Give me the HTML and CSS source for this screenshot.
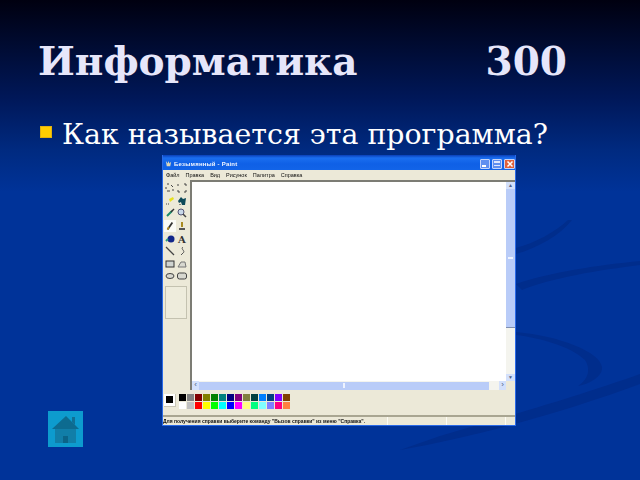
FILE: index.html
```html
<!DOCTYPE html>
<html lang="ru">
<head>
<meta charset="utf-8">
<title>Информатика 300</title>
<link rel="stylesheet" href="styles.css">
</head>
<body>
<main class="slide">
  <svg class="arcs" viewBox="0 0 640 480" aria-hidden="true">
    <g class="arc-group">
      <path d="M640 374C590 392 530 410 440 436L400 450C480 436 570 410 640 384Z"/>
      <path d="M516 284C550 272 600 265 640 261V265C600 270 550 278 522 290Z"/>
      <path d="M516 332C560 336 600 352 602 367C603 376 590 384 578 386C590 378 590 368 585 360C570 346 540 338 516 335Z"/>
      <path d="M516 254C540 247 560 235 572 220H568C555 232 535 243 516 248Z"/>
    </g>
  </svg>
  <h1 class="title"><span>Информатика</span><span>300</span></h1>
  <p class="bullet"><i class="marker"></i>Как называется эта программа?</p>
  <section class="paint">
    <header class="titlebar">
      <svg class="appicon" viewBox="0 0 8 8"><path d="M1 1l2 3 1-3 1 3 2-2-1 5H2z" fill="#ddd6b8"/></svg>
      <span class="apptitle">Безымянный - Paint</span>
      <span class="btn btn-blue"><b class="b-min"></b></span>
      <span class="btn btn-blue"><b class="b-max"></b></span>
      <span class="btn btn-red"><svg viewBox="0 0 8 8"><path d="M1.500 1.500l5 5m0-5l-5 5" stroke="#fff" stroke-width="1.500"/></svg></span>
    </header>
    <nav class="menu"><span>Файл</span><span>Правка</span><span>Вид</span><span>Рисунок</span><span>Палитра</span><span>Справка</span></nav>
    <div class="work">
      <aside class="tools">
        <div class="toolgrid">
          <svg viewBox="0 0 10 10"><path d="M2 1h2M6 2l2 2M8 6v2M1 4v2M2 8h3" stroke="#444" fill="none"/></svg>
          <svg viewBox="0 0 10 10"><path d="M1 1v2M1 7v2h2M7 9h2V7M9 3V1H7" stroke="#444" fill="none"/></svg>
          <svg viewBox="0 0 10 10"><path d="M4 3l4-2 1 2-4 3z" fill="#e6e020"/><path d="M1 8h4" stroke="#444" stroke-dasharray="1 1"/></svg>
          <svg viewBox="0 0 10 10"><path d="M1 5l3-4 2 2 3-1-1 7-3 0-1-3-2 1z" fill="#0d4a5a"/><path d="M3 8v1" stroke="#222"/></svg>
          <svg viewBox="0 0 10 10"><path d="M2 8l5-5" stroke="#1a8a6a" stroke-width="2"/><path d="M6 4l3-3" stroke="#333" stroke-width="1.500"/></svg>
          <svg viewBox="0 0 10 10"><circle cx="4" cy="4" r="3" fill="#c8d8e8" stroke="#557"/><path d="M6 6l3 3" stroke="#444" stroke-width="1.500"/></svg>
          <svg class="tool-on" viewBox="0 0 10 10"><path d="M3 8l4-6" stroke="#333" stroke-width="1.500"/><path d="M3 8l1-2" stroke="#b89020" stroke-width="1.500"/></svg>
          <svg viewBox="0 0 10 10"><path d="M5 1v5" stroke="#a88a20" stroke-width="2"/><path d="M2 8h6" stroke="#555" stroke-width="2"/></svg>
          <svg viewBox="0 0 10 10"><circle cx="6" cy="5" r="3.500" fill="#12268a"/><path d="M1 7l2-2" stroke="#2a9a80" stroke-width="2"/></svg>
          <svg viewBox="0 0 10 10"><text class="tool-a" x="5" y="9" text-anchor="middle">A</text></svg>
          <svg viewBox="0 0 10 10"><path d="M1 1l8 8" stroke="#444" stroke-width="1.200"/></svg>
          <svg viewBox="0 0 10 10"><path d="M6 1c-3 2 3 4 0 6l-2 2" stroke="#555" fill="none"/></svg>
          <svg viewBox="0 0 10 10"><rect x="1" y="2" width="8" height="6" fill="#cfd3d0" stroke="#333"/></svg>
          <svg viewBox="0 0 10 10"><path d="M1 8l3-5h4l1 5z" fill="#d8d8d0" stroke="#777"/></svg>
          <svg viewBox="0 0 10 10"><ellipse cx="5" cy="5" rx="4" ry="2.500" fill="#d8d8d0" stroke="#444"/></svg>
          <svg viewBox="0 0 10 10"><rect x=".5" y="2" width="9" height="6" rx="2" fill="#d8d8d0" stroke="#444"/></svg>
        </div>
        <div class="toolbox"></div>
      </aside>
      <div class="canvasarea">
        <div class="canvasrow">
          <div class="canvas"></div>
          <div class="vscroll">
            <i class="arrow">▲</i>
            <span class="vthumb"><b class="vgrip"></b></span>
            <span class="vtrack"></span>
            <i class="arrow">▼</i>
          </div>
        </div>
        <div class="hscroll"><i class="harrow">‹</i><span class="hthumb"><b class="hgrip"></b></span><i class="harrow">›</i></div>
      </div>
    </div>
    <div class="palette">
      <div class="current"><i class="swatch-fg"></i></div>
      <div class="colors">
        <i class="c" style="background:#000"></i><i class="c" style="background:#808080"></i><i class="c" style="background:#800000"></i><i class="c" style="background:#808000"></i><i class="c" style="background:#008000"></i><i class="c" style="background:#008080"></i><i class="c" style="background:#000080"></i><i class="c" style="background:#800080"></i><i class="c" style="background:#808040"></i><i class="c" style="background:#004040"></i><i class="c" style="background:#0080ff"></i><i class="c" style="background:#004080"></i><i class="c" style="background:#8000ff"></i><i class="c" style="background:#804000"></i>
        <i class="c" style="background:#fff"></i><i class="c" style="background:#c0c0c0"></i><i class="c" style="background:#f00"></i><i class="c" style="background:#ff0"></i><i class="c" style="background:#0f0"></i><i class="c" style="background:#0ff"></i><i class="c" style="background:#00f"></i><i class="c" style="background:#f0f"></i><i class="c" style="background:#ffff80"></i><i class="c" style="background:#00ff80"></i><i class="c" style="background:#80ffff"></i><i class="c" style="background:#8080ff"></i><i class="c" style="background:#ff0080"></i><i class="c" style="background:#ff8040"></i>
      </div>
    </div>
    <footer class="status">
      <span class="st-main">Для получения справки выберите команду "Вызов справки" из меню "Справка".</span>
      <span class="st-cell"></span><span class="st-cell"></span><span class="st-cell"></span>
    </footer>
  </section>
  <a class="home" href="#" aria-label="Домой">
    <svg viewBox="0 0 35 36"><path d="M24 6h3v8l-3-3z" fill="#0f6f95"/><path d="M18 5L4 18h27z" fill="#0d6b90"/><rect x="7" y="18" width="21" height="14" fill="#117ea8"/><rect x="15" y="25" width="5" height="7" fill="#0b6488"/></svg>
  </a>
</main>
</body>
</html>
```
FILE: styles.css
```css
* { box-sizing: border-box; }
html, body { margin: 0; padding: 0; }
body { width: 640px; height: 480px; overflow: hidden; }
.slide {
  position: relative;
  width: 640px;
  height: 480px;
  padding: 35px 73px 0 38px;
  overflow: hidden;
  font-family: "DejaVu Serif", serif;
  color: #fff;
  background: linear-gradient(180deg, #000010 0px, #000c35 50px, #00185a 100px, #002a80 150px, #003399 192px, #003399 480px);
}
.arcs { position: absolute; inset: 0; width: 640px; height: 480px; }
.arc-group { fill: #002d8c; }
.title {
  position: relative;
  margin: 0;
  display: flex;
  justify-content: space-between;
  font-size: 39px;
  line-height: 52px;
  font-weight: 700;
  color: #e6e6fa;
}
.bullet {
  position: relative;
  margin: 32px 0 0;
  display: flex;
  align-items: center;
  font-size: 28.400px;
  line-height: 32px;
  white-space: nowrap;
}
.marker {
  width: 12px;
  height: 12px;
  margin: 0 10px 6px 2px;
  background: #ffcc00;
  box-shadow: inset 0 0 0 1px #e0b010;
}
.paint {
  position: absolute;
  left: 162px;
  top: 155px;
  width: 354px;
  height: 271px;
  display: flex;
  flex-direction: column;
  padding: 0 1px 1px;
  background: #2a6ae8;
  font-family: "Liberation Sans", sans-serif;
  color: #111;
}
.titlebar {
  display: flex;
  align-items: center;
  gap: 2px;
  height: 15px;
  flex: none;
  padding: 3px 0 1px 2px;
  background: linear-gradient(180deg, #0a3fb8 0%, #1a6ef0 20%, #0f60e6 60%, #1264e8 100%);
}
.appicon { width: 7px; height: 7px; }
.apptitle { flex: 1; color: #f2f6ff; font-size: 6px; letter-spacing: .2px; font-weight: 700; filter: blur(.3px); }
.btn {
  width: 10px;
  height: 10px;
  display: flex;
  align-items: center;
  justify-content: center;
  border: 1px solid #c4d4fb;
  border-radius: 1px;
  flex: none;
}
.btn svg { width: 8px; height: 8px; }
.btn-blue { background: #5f8ff0; }
.btn-red { width: 11px; background: #e0603a; }
.b-min { width: 4px; height: 2px; background: #fff; margin: 4px 3px 0 0; }
.b-max { width: 6px; height: 5px; border-top: 2px solid #dfe8ff; border-bottom: 1px solid #dfe8ff; }
.menu {
  flex: none;
  display: flex;
  gap: 6px;
  height: 10px;
  padding: 0 0 0 3px;
  align-items: center;
  background: #ece9d8;
  font-size: 5.500px;
  filter: blur(.25px);
}
.work { flex: 1; display: flex; min-height: 0; background: #ece9d8; }
.tools {
  width: 27px;
  flex: none;
  display: flex;
  flex-direction: column;
  padding: 2px 0 0 1px;
}
.toolgrid {
  display: grid;
  grid-template-columns: 12px 12px;
  grid-auto-rows: 12.600px;
  justify-items: center;
  align-items: center;
  width: 24px;
}
.toolgrid svg { width: 10px; height: 10px; }
.toolgrid .tool-on { width: 12px; height: 12px; background: #fbfbf6; }
.tool-a { font: 700 10px "DejaVu Serif", serif; fill: #333; }
.toolbox {
  width: 22px;
  height: 33px;
  margin: 3px 0 0 1px;
  border: 1px solid #c4c2b0;
  background: #eeecdc;
}
.canvasarea {
  flex: 1;
  min-width: 0;
  display: flex;
  flex-direction: column;
  border-left: 2px solid #7c7c74;
  border-top: 2px solid #7c7c74;
}
.canvasrow { flex: 1; display: flex; min-height: 0; }
.canvas { flex: 1; background: #fff; }
.vscroll {
  width: 9px;
  flex: none;
  display: flex;
  flex-direction: column;
  background: #f4f4ee;
}
.arrow { height: 7px; flex: none; font-style: normal; font-size: 5px; line-height: 7px; text-align: center; color: #4d6185; background: #d3e0fb; }
.vthumb {
  height: 139px;
  flex: none;
  display: flex;
  align-items: center;
  justify-content: center;
  background: #b9ccf8;
  border-bottom: 1px solid #7f8fb0;
}
.vgrip { width: 5px; height: 2px; background: #eef3ff; }
.vtrack { flex: 1; }
.hscroll {
  flex: none;
  display: flex;
  align-items: center;
  height: 9px;
  margin-right: 9px;
  background: #f4f4ee;
}
.harrow { width: 7px; height: 9px; flex: none; font-style: normal; font-size: 8px; line-height: 8px; text-align: center; color: #4d6185; background: #d3e0fb; }
.hthumb {
  flex: 1;
  height: 8px;
  margin-right: 10px;
  display: flex;
  align-items: center;
  justify-content: center;
  background: #b9ccf8;
}
.hgrip { width: 2px; height: 5px; background: #eef3ff; }
.palette {
  flex: none;
  display: flex;
  gap: 3px;
  height: 25px;
  padding: 4px 0 0 1px;
  background: #ece9d8;
}
.current {
  width: 12px;
  height: 13px;
  padding: 2px;
  background: #fff;
  box-shadow: inset -1px -1px 0 #c8c6b6;
}
.swatch-fg { display: block; width: 7px; height: 7px; background: #000; }
.colors {
  display: grid;
  grid-template-columns: repeat(14, 8px);
  grid-auto-rows: 8px;
  gap: 0;
}
.c { display: block; margin: 0 1px 1px 0; }
.status {
  flex: none;
  height: 10px;
  display: flex;
  align-items: center;
  background: #ece9d8;
  border-top: 2px solid #a9a692;
  font-size: 5px;
  filter: blur(.25px);
}
.st-main { width: 224px; white-space: nowrap; font-weight: 700; overflow: hidden; }
.st-cell { width: 59px; height: 100%; border-left: 1px solid #fdfcf4; }
.st-cell:last-child { flex: 1; }
.home {
  position: absolute;
  left: 48px;
  top: 411px;
  width: 35px;
  height: 36px;
  display: block;
  background: #0d9bce;
}
.home svg { display: block; width: 35px; height: 36px; }
```
